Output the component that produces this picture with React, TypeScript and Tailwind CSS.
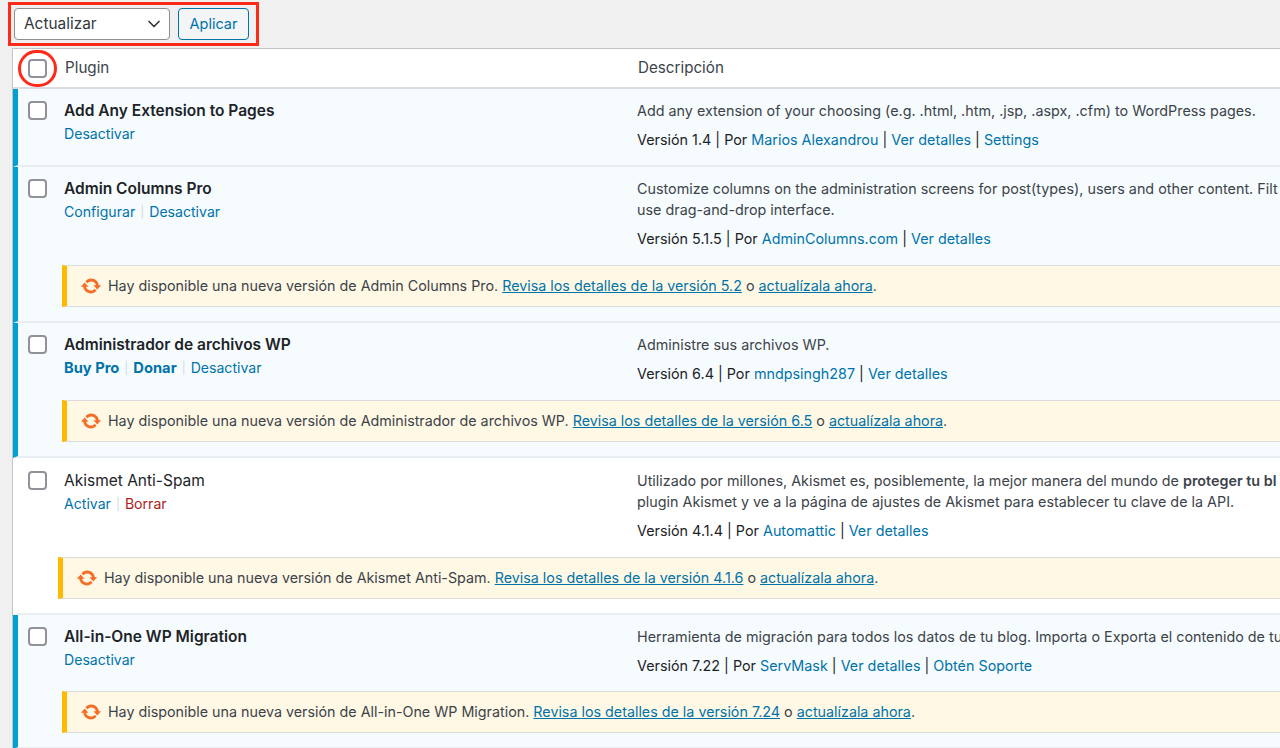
import { ChevronDown } from "lucide-react";

type Link = { label: string; bold?: boolean; red?: boolean };
type Plugin = {
  name: string;
  active: boolean;
  actions: Link[];
  desc: React.ReactNode[];
  version: string;
  author: string;
  extra: string[];
  update?: { newVersion: string };
  height: string;
  noticeLeft?: string;
  contentTop?: string;
};

const plugins: Plugin[] = [
  {
    name: "Add Any Extension to Pages",
    active: true,
    actions: [{ label: "Desactivar" }],
    desc: ["Add any extension of your choosing (e.g. .html, .htm, .jsp, .aspx, .cfm) to WordPress pages."],
    version: "1.4",
    author: "Marios Alexandrou",
    extra: ["Ver detalles", "Settings"],
    height: "h-[78px]",
  },
  {
    name: "Admin Columns Pro",
    active: true,
    actions: [{ label: "Configurar" }, { label: "Desactivar" }],
    desc: [
      "Customize columns on the administration screens for post(types), users and other content. Filt",
      "use drag-and-drop interface.",
    ],
    version: "5.1.5",
    author: "AdminColumns.com",
    extra: ["Ver detalles"],
    update: { newVersion: "5.2" },
    height: "h-[156px]",
  },
  {
    name: "Administrador de archivos WP",
    active: true,
    actions: [{ label: "Buy Pro", bold: true }, { label: "Donar", bold: true }, { label: "Desactivar" }],
    desc: ["Administre sus archivos WP."],
    version: "6.4",
    author: "mndpsingh287",
    extra: ["Ver detalles"],
    update: { newVersion: "6.5" },
    height: "h-[135px]",
  },
  {
    name: "Akismet Anti-Spam",
    active: false,
    actions: [{ label: "Activar" }, { label: "Borrar", red: true }],
    desc: [
      <>
        Utilizado por millones, Akismet es, posiblemente, la mejor manera del mundo de <b className="font-semibold">proteger tu bl</b>
      </>,
      "plugin Akismet y ve a la página de ajustes de Akismet para establecer tu clave de la API.",
    ],
    version: "4.1.4",
    author: "Automattic",
    extra: ["Ver detalles"],
    update: { newVersion: "4.1.6" },
    height: "h-[157px]",
    noticeLeft: "ml-[40px]",
    contentTop: "mt-[1px]",
  },
  {
    name: "All-in-One WP Migration",
    active: true,
    actions: [{ label: "Desactivar" }],
    desc: ["Herramienta de migración para todos los datos de tu blog. Importa o Exporta el contenido de tu"],
    version: "7.22",
    author: "ServMask",
    extra: ["Ver detalles", "Obtén Soporte"],
    update: { newVersion: "7.24" },
    height: "h-[134px]",
  },
];

function Checkbox() {
  return <span className="block h-[19px] w-[19px] shrink-0 rounded-[4px] border-2 border-[#8f9399] bg-white" />;
}

function UpdateIcon() {
  return (
    <svg width="22" height="22" viewBox="0 0 20 20" className="shrink-0" fill="#f56e28">
      <path d="M10.2 3.28c3.53 0 6.43 2.61 6.92 6h2.08l-3.5 4-3.5-4h2.32c-.45-1.97-2.21-3.45-4.32-3.45-1.45 0-2.73.71-3.54 1.78L4.95 5.66C6.23 4.2 8.11 3.28 10.2 3.28zm-.4 13.44c-3.52 0-6.43-2.61-6.92-6H.8l3.5-4c1.17 1.33 2.33 2.67 3.5 4H5.48c.45 1.97 2.21 3.45 4.32 3.45 1.45 0 2.73-.71 3.54-1.78l1.71 1.95c-1.28 1.46-3.15 2.38-5.25 2.38z" />
    </svg>
  );
}

function Row({ p }: { p: Plugin }) {
  return (
    <div
      className={`${p.height} flex flex-col border-b-2 border-[#e8edf1] ${
        p.active ? "border-l-[5px] border-l-[#00a0d2] bg-[#f6fbfe]" : "border-l-[5px] border-l-white bg-white"
      }`}
    >
      <div className={`flex flex-1 ${p.contentTop ?? ""}`}>
        <div className="w-[46px] shrink-0 pl-[10px] pt-[12px]">
          <Checkbox />
        </div>
        <div className="w-[573px] shrink-0 pt-[10px]">
          <div className={`text-[15.5px] leading-[24px] text-[#1d2327] ${p.active ? "font-semibold" : "font-normal"}`}>{p.name}</div>
          <div className="flex items-center text-[14.1px] leading-[22px]">
            {p.actions.map((a, i) => (
              <span key={a.label} className="flex items-center">
                {i > 0 && <span className="mx-[5px] text-[12px] text-[#d5dade]">|</span>}
                <span className={`${a.red ? "text-[#b01c22]" : "text-[#0073aa]"} ${a.bold ? "text-[14.7px] font-bold" : ""}`}>{a.label}</span>
              </span>
            ))}
          </div>
        </div>
        <div className="min-w-0 flex-1 overflow-hidden pt-[11px] text-[14.35px] text-[#3c434a]">
          {p.desc.map((d, i) => (
            <div key={i} className="whitespace-nowrap leading-[21px]">
              {d}
            </div>
          ))}
          <div className="mt-[8px] whitespace-nowrap leading-[21px] text-[#1d2327]">
            Versión {p.version} | Por <span className="text-[#0073aa]">{p.author}</span>
            {p.extra.map((e) => (
              <span key={e}>
                {" | "}
                <span className="text-[#0073aa]">{e}</span>
              </span>
            ))}
          </div>
        </div>
      </div>
      {p.update && (
        <div
          className={`${p.noticeLeft ?? "ml-[44px]"} -mr-[10px] mb-[14px] flex h-[42px] items-center whitespace-nowrap border border-l-[5px] border-[#dcdcde] border-l-[#ffb900] bg-[#fff8e5] pl-[13px] text-[14.3px] text-[#3c434a]`}
        >
          <UpdateIcon />
          <span className="ml-[6px]">
            Hay disponible una nueva versión de {p.name}.{" "}
            <span className="text-[#0073aa] underline">Revisa los detalles de la versión {p.update.newVersion}</span> o{" "}
            <span className="text-[#0073aa] underline">actualízala ahora</span>.
          </span>
        </div>
      )}
    </div>
  );
}

export default function App() {
  return (
    <div className="relative h-[748px] w-[1280px] overflow-hidden bg-[#f0f0f1] font-['Inter',sans-serif]">
      <div className="ml-[8px] mt-[2px] inline-flex h-[44px] items-center gap-[8px] border-[3px] border-[#ff2a17] pl-[3px] pr-[7px]">
        <div className="flex h-[32px] w-[156px] items-center justify-between rounded-[4px] border border-[#8c8f94] bg-white pl-[9px] pr-[5px] text-[15.4px] text-[#32373c]">
          Actualizar
          <ChevronDown size={20} strokeWidth={2} />
        </div>
        <div className="flex h-[32px] w-[71px] items-center justify-center rounded-[4px] border border-[#0073aa] bg-[#f3f5f6] text-[14.5px] text-[#0073aa]">
          Aplicar
        </div>
      </div>
      <div className="ml-[12px] mt-[2px] border-l border-t border-[#c3c4c7] bg-white">
        <div className="flex h-[40px] items-center border-b-2 border-[#dcdde0] pt-[1px] text-[15.2px] text-[#3c434a]">
          <div className="w-[52px] shrink-0 pl-[15px]">
            <Checkbox />
          </div>
          <div className="w-[573px] shrink-0">Plugin</div>
          <div>Descripción</div>
        </div>
        {plugins.map((p) => (
          <Row key={p.name} p={p} />
        ))}
      </div>
      <div className="absolute left-[18px] top-[50px] h-[37px] w-[39px] rounded-full border-[3px] border-[#ff2a17]" />
    </div>
  );
}
